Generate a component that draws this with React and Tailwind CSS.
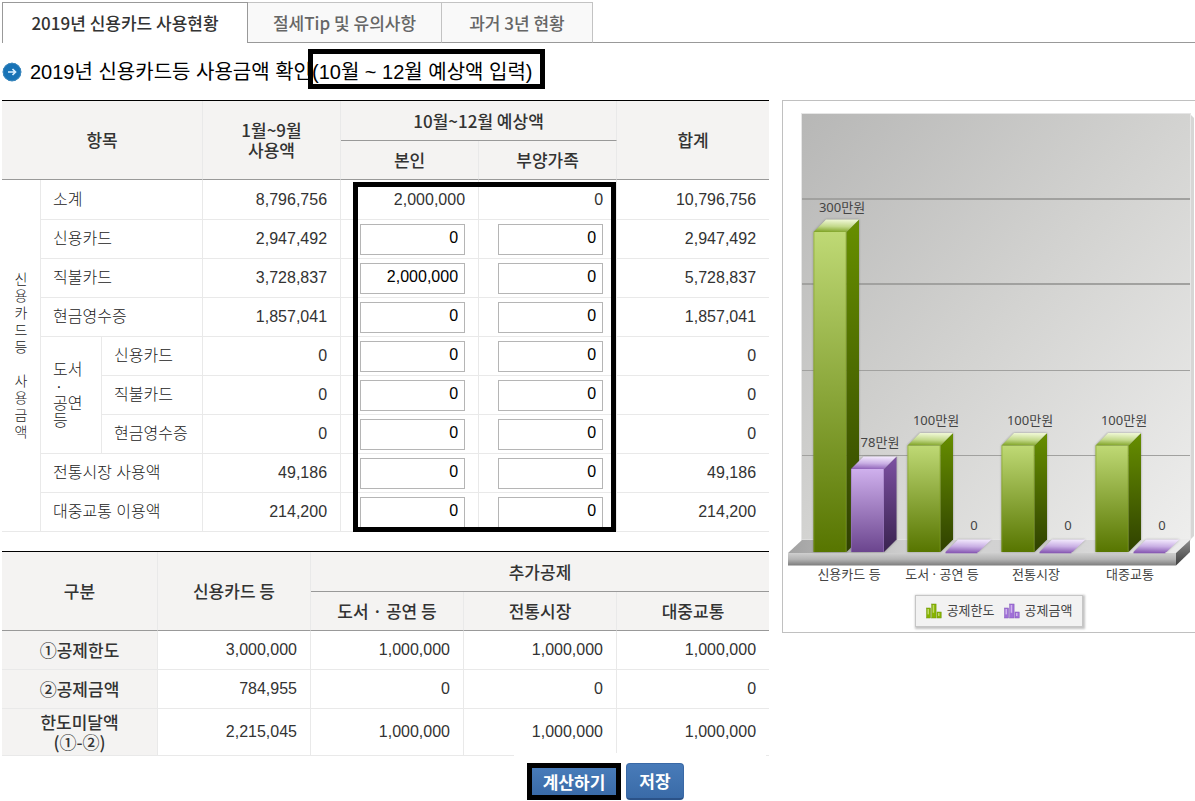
import React from "react";

const BODY_FONT = "font-['Liberation_Sans','Noto_Sans_CJK_KR',sans-serif]";
const HEAD_FONT = "font-['Noto_Sans_CJK_KR',sans-serif]";

const TABS = [
  { label: "2019년 신용카드 사용현황", active: true, width: "w-[246px]" },
  { label: "절세Tip 및 유의사항", width: "w-[194px]" },
  { label: "과거 3년 현황", width: "w-[151px]" },
];

const ROWS = [
  { label: "신용카드", used: "2,947,492", self: "0", family: "0", total: "2,947,492" },
  { label: "직불카드", used: "3,728,837", self: "2,000,000", family: "0", total: "5,728,837" },
  { label: "현금영수증", used: "1,857,041", self: "0", family: "0", total: "1,857,041" },
  { label: "신용카드", used: "0", self: "0", family: "0", total: "0", culture: true, first: true },
  { label: "직불카드", used: "0", self: "0", family: "0", total: "0", culture: true },
  { label: "현금영수증", used: "0", self: "0", family: "0", total: "0", culture: true },
  { label: "전통시장 사용액", used: "49,186", self: "0", family: "0", total: "49,186" },
  { label: "대중교통 이용액", used: "214,200", self: "0", family: "0", total: "214,200" },
];

const SUMMARY = [
  { label: ["①공제한도"], values: ["3,000,000", "1,000,000", "1,000,000", "1,000,000"] },
  { label: ["②공제금액"], values: ["784,955", "0", "0", "0"] },
  { label: ["한도미달액", "(①-②)"], values: ["2,215,045", "1,000,000", "1,000,000", "1,000,000"], tall: true },
];

function Th({ children, className = "", last, ...rest }) {
  return (
    <th
      className={`bg-[#f4f3f2] border-b border-b-[#999] p-0 text-center align-middle text-[17px] leading-5 font-medium text-[#333] ${HEAD_FONT} ${last ? "" : "border-r border-r-[#e9e9e9]"} ${className}`}
      {...rest}
    >
      {children}
    </th>
  );
}

function NumberCell({ children, last }) {
  return (
    <td className={`border-b border-[#e9e9e9] py-0 pl-0 pr-[13px] text-right ${last ? "" : "border-r"}`}>{children}</td>
  );
}

function LabelCell({ children, className = "", ...rest }) {
  return (
    <th scope="row" className={`border-r border-b border-[#e9e9e9] py-0 pl-3 pr-0 text-left font-light text-[#222] ${className}`} {...rest}>
      {children}
    </th>
  );
}

function InputCell({ value, label }) {
  return (
    <td className="border-r border-b border-[#e9e9e9] py-0 pl-[19px] pr-[13px]">
      <input
        type="text"
        aria-label={label}
        defaultValue={value}
        className="block h-[31px] w-full border border-[#b5b5b5] bg-white pt-0 pb-[2px] pl-1 pr-[6px] text-right text-base text-black"
      />
    </td>
  );
}

function UsageTable() {
  return (
    <div className="relative">
      <table className="w-full table-fixed border-separate border-spacing-0 border-t border-t-black text-base leading-5 font-light text-[#333]">
        <colgroup>
          <col className="w-[39px]" />
          <col className="w-[61px]" />
          <col className="w-[101px]" />
          <col className="w-[138px]" />
          <col className="w-[138px]" />
          <col className="w-[138px]" />
          <col className="w-[152px]" />
        </colgroup>
        <thead>
          <tr className="h-10">
            <Th colSpan={3} rowSpan={2}>항목</Th>
            <Th rowSpan={2}>1월~9월<br />사용액</Th>
            <Th colSpan={2}>10월~12월 예상액</Th>
            <Th rowSpan={2} last>합계</Th>
          </tr>
          <tr className="h-[39px]">
            <Th>본인</Th>
            <Th>부양가족</Th>
          </tr>
        </thead>
        <tbody>
          <tr className="h-10">
            <th
              rowSpan={9}
              scope="rowgroup"
              className="border-r border-b border-[#e9e9e9] p-0 text-center text-sm leading-[17px] font-light whitespace-pre-line text-[#222]"
            >
              {"신\n용\n카\n드\n등\n\n사\n용\n금\n액"}
            </th>
            <LabelCell colSpan={2}>소계</LabelCell>
            <NumberCell>8,796,756</NumberCell>
            <NumberCell>2,000,000</NumberCell>
            <NumberCell>0</NumberCell>
            <NumberCell last>10,796,756</NumberCell>
          </tr>
          {ROWS.map((r, i) => (
            <tr key={i} className="h-[39px]">
              {r.first && (
                <LabelCell rowSpan={3} className="leading-[17px]">
                  도서<br />
                  <span className="inline-block w-3 text-center">·</span><br />
                  공연<br />등
                </LabelCell>
              )}
              <LabelCell colSpan={r.culture ? 1 : 2}>{r.label}</LabelCell>
              <NumberCell>{r.used}</NumberCell>
              <InputCell value={r.self} label={`${r.label} 본인`} />
              <InputCell value={r.family} label={`${r.label} 부양가족`} />
              <NumberCell last>{r.total}</NumberCell>
            </tr>
          ))}
        </tbody>
      </table>
      <div className="pointer-events-none absolute top-[82px] right-[20%] bottom-0 left-[45.8%] border-5 border-black" />
    </div>
  );
}

function SummaryTable() {
  return (
    <table className="mt-[19px] w-full table-fixed border-separate border-spacing-0 border-t border-t-black text-base leading-5 font-light text-[#333]">
      <colgroup>
        <col className="w-[156px]" />
        <col className="w-[153px]" />
        <col className="w-[153px]" />
        <col className="w-[153px]" />
        <col className="w-[152px]" />
      </colgroup>
      <thead>
        <tr className="h-10">
          <Th rowSpan={2}>구분</Th>
          <Th rowSpan={2}>신용카드 등</Th>
          <Th colSpan={3} last>추가공제</Th>
        </tr>
        <tr className="h-[39px]">
          <Th>도서 · 공연 등</Th>
          <Th>전통시장</Th>
          <Th last>대중교통</Th>
        </tr>
      </thead>
      <tbody>
        {SUMMARY.map((r) => (
          <tr key={r.label[0]} className={r.tall ? "h-[47px]" : "h-[39px]"}>
            <th scope="row" className={`border-r border-b border-[#e9e9e9] bg-[#f4f3f2] p-0 text-center text-[17px] leading-5 font-medium ${HEAD_FONT}`}>
              {r.label.map((l) => (
                <div key={l}>{l}</div>
              ))}
            </th>
            {r.values.map((v, i) => (
              <NumberCell key={i} last={i === 3}>{v}</NumberCell>
            ))}
          </tr>
        ))}
      </tbody>
    </table>
  );
}

function Bar({ x, y, kind }) {
  const r = x + 33;
  const d = 12.5;
  const base = 552;
  return (
    <g>
      <path d={`M${x} ${y}L${x + d} ${y - d}H${r + d}V${base - d}L${r} ${base}H${x}Z`} fill="#555" filter="url(#soft)" opacity="0.55" />
      <rect x={x} y={y} width="33" height={base - y} fill={`url(#${kind}Front)`} />
      <path d={`M${r} ${y}L${r + d} ${y - d}V${base - d}L${r} ${base}Z`} fill={`url(#${kind}Side)`} />
      <path d={`M${x} ${y}L${x + d} ${y - d}H${r + d}L${r} ${y}Z`} fill={`url(#${kind}Top)`} />
      <path d={`M${x + 0.5} ${base}V${y}M${r - 0.5} ${y}V${base}`} stroke={kind === "green" ? "#7fa01c" : "#9a78bd"} opacity="0.5" fill="none" />
    </g>
  );
}

function FlatBar({ x }) {
  return (
    <g>
      <path d={`M${x} 552L${x + 12.5} 539.5H${x + 46}L${x + 33} 552Z`} fill="#555" filter="url(#soft)" opacity="0.4" />
      <path d={`M${x} 552L${x + 12.5} 539.5H${x + 46}L${x + 33} 552Z`} fill="url(#purpleTop)" />
      <rect x={x} y="552" width="32" height="1.3" fill="#8a5cb5" />
    </g>
  );
}

function Grad({ id, stops, x2 = 0, y2 = 1 }) {
  return (
    <linearGradient id={id} x1="0" y1="0" x2={x2} y2={y2}>
      {stops.map((c, i) => (
        <stop key={i} offset={i / (stops.length - 1)} stopColor={c} />
      ))}
    </linearGradient>
  );
}

function Chart() {
  return (
    <svg viewBox="783 101 412 487" className="block w-full text-[13px]" role="img" aria-label="공제한도와 공제금액">
      <defs>
        <Grad id="wall" stops={["#b7b7b6", "#d3d3d1", "#eeeeed"]} x2={1} y2={1} />
        <Grad id="floor" stops={["#a2a2a2", "#d4d4d4", "#d0d0d0", "#eeeeee"]} x2={1} y2={0} />
        <Grad id="edge" stops={["#cfcfcf", "#b4b4b4", "#7c7c7c"]} />
        <Grad id="end" stops={["#8e8e8e", "#3e3e3e"]} />
        <Grad id="greenFront" stops={["#bfd975", "#577500"]} />
        <Grad id="greenSide" stops={["#678f00", "#2f4100"]} />
        <Grad id="greenTop" stops={["#ecf5d0", "#c3d98b", "#7a9f1e"]} x2={-0.1} />
        <Grad id="purpleFront" stops={["#cfb0ed", "#6b458e"]} />
        <Grad id="purpleSide" stops={["#7c50a2", "#3a2350"]} />
        <Grad id="purpleTop" stops={["#efe4fb", "#c9afe4", "#8a5cb5"]} x2={-0.1} />
        <filter id="soft" x="-30%" y="-30%" width="160%" height="160%">
          <feGaussianBlur stdDeviation="1.2" />
        </filter>
      </defs>
      <path d="M1190 114L1194 118V536L1190 540Z" fill="#d6d6d5" />
      <rect x="801.5" y="113.5" width="389" height="426.5" fill="url(#wall)" stroke="#e6e6e6" />
      <path d="M802 199H1190M802 284H1190" stroke="#a1a19f" strokeWidth="2" />
      <path d="M802 370.5H1190M802 455.5H1190" stroke="#a1a19f" />
      <path d="M788 553L802 540H1190L1176 553Z" fill="url(#floor)" />
      <rect x="788" y="553" width="388" height="12.5" fill="url(#edge)" />
      <path d="M1176 553L1190 540V552L1176 565.5Z" fill="url(#end)" />
      <Bar x={813.5} y={232} kind="green" />
      <Bar x={851} y={469} kind="purple" />
      {[907.5, 1001.5, 1095.5].map((x) => (
        <g key={x}>
          <Bar x={x} y={445.5} kind="green" />
          <FlatBar x={x + 38} />
        </g>
      ))}
      <g fill="#444" textAnchor="middle" className="font-['Noto_Sans','Noto_Sans_CJK_KR',sans-serif]">
        <text x="842" y="212">300만원</text>
        <text x="880" y="447">78만원</text>
        {[936, 1030, 1124].map((x) => (
          <g key={x}>
            <text x={x} y="425">100만원</text>
            <text x={x + 38} y="530">0</text>
          </g>
        ))}
        <text x="849" y="579">신용카드 등</text>
        <text x="942" y="579">도서 · 공연 등</text>
        <text x="1036" y="579">전통시장</text>
        <text x="1130" y="579">대중교통</text>
      </g>
    </svg>
  );
}

function LegendIcon({ dark, mid, light }) {
  return (
    <svg viewBox="0 0 16 16" className="size-4 shrink-0" aria-hidden="true">
      {[[0.5, 5, 4], [5.7, 1, 4.4], [11, 9, 4.2]].map(([x, y, w]) => (
        <g key={x}>
          <rect x={x} y={y} width={w} height={15 - y} fill={mid} stroke={dark} strokeWidth="0.5" />
          <rect x={x + 1} y={y + 1} width="1.5" height={(14 - y) * 0.6} fill={light} opacity="0.8" />
        </g>
      ))}
    </svg>
  );
}

function ChartPanel() {
  return (
    <section className="min-w-0 flex-[412] self-start border-y border-l border-[#c0c0c0] pb-[5px]">
      <Chart />
      <div className="flex justify-center pt-[7px] pl-5">
        <div className="flex h-8 items-center gap-[9px] border border-[#c6c6c6] bg-[#f2f2f2] px-[10px] text-[13px] text-[#444] shadow-[1px_1px_2px_1px_#c4c4c4]">
          <span className="flex items-center gap-[5px]">
            <LegendIcon dark="#6f9410" mid="#86b300" light="#cbe27f" />
            공제한도
          </span>
          <span className="flex items-center gap-[5px]">
            <LegendIcon dark="#8259b8" mid="#a06fd8" light="#dcc6f3" />
            공제금액
          </span>
        </div>
      </div>
    </section>
  );
}

const BUTTON = `bg-linear-to-b from-[#487bb9] to-[#3a6ba8] text-[17px] leading-5 font-bold text-white ${HEAD_FONT}`;

export default function App() {
  return (
    <div className={`overflow-x-hidden bg-white pt-[2px] pl-[2px] ${BODY_FONT}`}>
      <nav className={`flex items-stretch ${HEAD_FONT}`}>
        {TABS.map((t) => (
          <a
            key={t.label}
            href="#"
            aria-current={t.active ? "page" : undefined}
            className={`flex h-[41px] items-center justify-center border-t text-[17px] font-medium whitespace-nowrap ${t.width} ${
              t.active
                ? "border-x border-[#999] bg-white text-[#333]"
                : "border-r border-b border-[#c3c3c3] border-b-[#999] bg-[#f9f9f9] text-[#666]"
            }`}
          >
            {t.label}
          </a>
        ))}
        <div className="flex-1 border-b border-[#999]" />
      </nav>

      <h1 className="flex h-[57px] items-center gap-2 text-xl text-black">
        <svg viewBox="0 0 20 20" className="size-5 shrink-0" aria-hidden="true">
          <circle cx="10" cy="10" r="9.3" fill="#1873b6" />
          <circle cx="10" cy="10" r="8.8" fill="none" stroke="#3c88bd" />
          <path d="M6 10H13M10.5 7L13.5 10L10.5 13" fill="none" stroke="#d9efff" strokeWidth="1.7" />
        </svg>
        <span className="whitespace-nowrap">
          2019년 신용카드등 사용금액 확인
          <span className="relative inline-block">
            (10월 ~ 12월 예상액 입력)
            <span className="absolute -top-[9px] -right-3 -bottom-[3px] -left-1 border-5 border-black" />
          </span>
        </span>
      </h1>

      <div className="flex gap-[13px]">
        <main className="min-w-0 flex-[767]">
          <UsageTable />
          <SummaryTable />
          <div className="flex justify-end pr-[3px]">
            <div className="relative -mt-[3px] flex w-[252px] items-start gap-[5px] bg-white pt-[10px] pb-[1px] pl-[13px]">
              <div className="w-[94px] border-5 border-black">
                <button type="button" className={`block h-[27px] w-full ${BUTTON}`}>계산하기</button>
              </div>
              <button type="button" className={`h-[37px] w-[58px] rounded-sm border border-b-2 border-[#3a69a6] border-b-[#2b5288] ${BUTTON}`}>저장</button>
            </div>
          </div>
        </main>
        <ChartPanel />
      </div>
    </div>
  );
}
